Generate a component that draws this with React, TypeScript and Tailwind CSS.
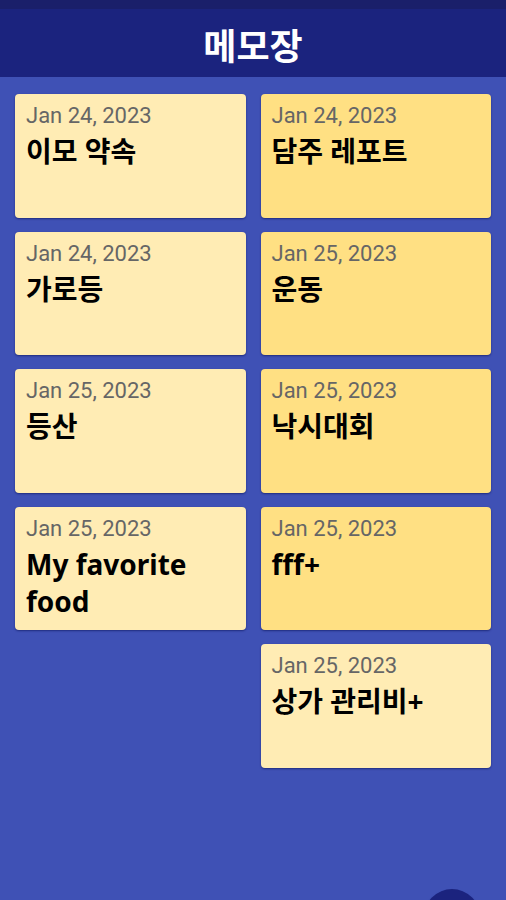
const memos = {
  left: [
    { date: "Jan 24, 2023", title: "이모 약속", dark: false },
    { date: "Jan 24, 2023", title: "가로등", dark: false },
    { date: "Jan 25, 2023", title: "등산", dark: false },
    { date: "Jan 25, 2023", title: "My favorite food", dark: false },
  ],
  right: [
    { date: "Jan 24, 2023", title: "담주 레포트", dark: true },
    { date: "Jan 25, 2023", title: "운동", dark: true },
    { date: "Jan 25, 2023", title: "낙시대회", dark: true },
    { date: "Jan 25, 2023", title: "fff+", dark: true },
    { date: "Jan 25, 2023", title: "상가 관리비+", dark: false },
  ],
};

function MemoCard({ date, title, dark }: { date: string; title: string; dark: boolean }) {
  return (
    <div
      className={
        "h-[123.5px] rounded-[4px] px-[11px] pt-[8px] shadow-[0_1px_2px_rgba(10,20,90,0.6)] " +
        (dark ? "bg-[#ffe083]" : "bg-[#ffecb4]")
      }
    >
      <div className="text-[22px] leading-[28px] text-[#666666] font-['Roboto',sans-serif]">{date}</div>
      <div className="mt-[3px] w-[180px] text-[28px] leading-[37px] font-bold text-black font-['Noto_Sans','Noto_Sans_CJK_KR',sans-serif]">
        {title}
      </div>
    </div>
  );
}

export default function App() {
  return (
    <div className="relative h-[900px] w-[506px] overflow-hidden bg-[#3f51b5]">
      <div className="h-[9px] bg-[#1a1f6a]"></div>
      <div className="flex h-[68px] items-center justify-center bg-[#1b237e]">
        <h1 className="mt-[2px] text-[36px] font-bold text-white font-['Noto_Sans_CJK_KR',sans-serif]">메모장</h1>
      </div>
      <div className="flex gap-[15px] p-[15px] pt-[17px]">
        <div className="flex flex-1 flex-col gap-[14px]">
          {memos.left.map((m, i) => (
            <MemoCard key={i} {...m} />
          ))}
        </div>
        <div className="flex flex-1 flex-col gap-[14px]">
          {memos.right.map((m, i) => (
            <MemoCard key={i} {...m} />
          ))}
        </div>
      </div>
      <button className="absolute left-[424px] top-[889px] h-[56px] w-[56px] rounded-full bg-[#1b237e] shadow-md"></button>
    </div>
  );
}
